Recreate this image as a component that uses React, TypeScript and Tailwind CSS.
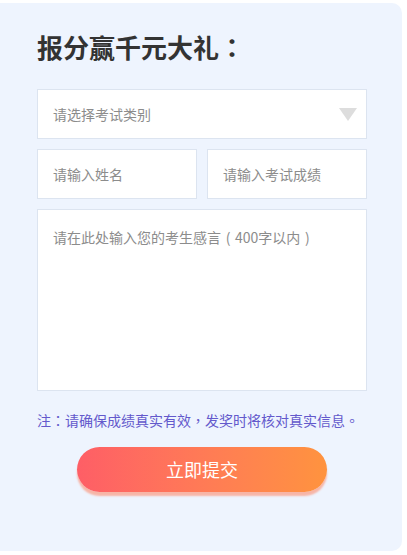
import React from "react";

const TC = { fontFamily: '"Noto Sans CJK TC", "Noto Sans CJK SC", sans-serif' };

function P({ children }: { children: React.ReactNode }) {
  return <span style={TC}>{children}</span>;
}

export default function App() {
  const font = { fontFamily: '"Noto Sans CJK SC", "Noto Sans", sans-serif' };
  return (
    <div className="w-[407px] h-[555px] bg-white pt-[3px]" style={font}>
      <div className="w-[402px] h-[548px] bg-[#eef4fe] rounded-r-[10px] pt-[27px] pl-[37px]">
        <h1 className="text-[26px] leading-[34px] font-bold text-[#333333] whitespace-nowrap">
          报分赢千元大礼<P>：</P>
        </h1>
        <div className="w-[330px] mt-[25px] flex flex-col gap-[10px]">
          <div className="h-[50px] bg-white border border-[#dce4f0] flex items-center justify-between pl-[15px] pr-[9px]">
            <span className="text-[14px] text-[#8c8c8c]">请选择考试类别</span>
            <svg width="18" height="13" viewBox="0 0 18 13">
              <polygon points="0,0 18,0 9,13" fill="#dddddd" />
            </svg>
          </div>
          <div className="flex gap-[10px]">
            <input
              className="w-[160px] h-[50px] bg-white border border-[#dce4f0] px-[15px] text-[14px] outline-none placeholder:text-[#8c8c8c]"
              placeholder="请输入姓名"
            />
            <input
              className="w-[160px] h-[50px] bg-white border border-[#dce4f0] px-[15px] text-[14px] outline-none placeholder:text-[#8c8c8c]"
              placeholder="请输入考试成绩"
            />
          </div>
          <textarea
            className="w-[330px] h-[182px] bg-white border border-[#dce4f0] px-[15px] pt-[17px] text-[14px] leading-[20px] resize-none outline-none placeholder:text-[#8c8c8c]"
            placeholder={"请在此处输入您的考生感言\u2004(\u2004400字以内\u2004)"}
          />
        </div>
        <p className="w-[340px] mt-[19px] text-[14px] leading-[20px] text-[#6359cc] whitespace-nowrap">
          注<P>：</P>请确保成绩真实有效<P>，</P>发奖时将核对真实信息<P>。</P>
        </p>
        <div className="w-[330px] mt-[17px] flex justify-center">
          <button className="w-[250px] h-[45px] rounded-full bg-gradient-to-r from-[#fe5e66] to-[#ff933e] text-white text-[18px] shadow-[0_4px_2px_#f7b5a7]">
            立即提交
          </button>
        </div>
      </div>
    </div>
  );
}
